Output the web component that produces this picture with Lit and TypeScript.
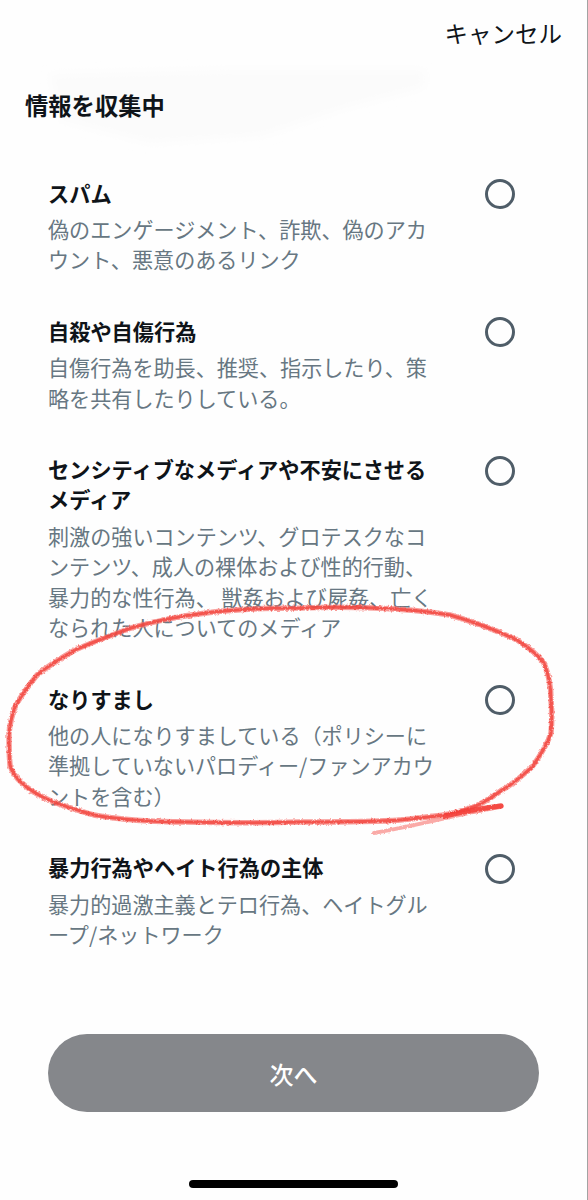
import { LitElement, html, css, svg } from "lit";
import { customElement } from "lit/decorators.js";

interface Item { title: string[]; desc: string[]; }

const ITEMS: Item[] = [
  { title: ["スパム"], desc: ["偽のエンゲージメント、詐欺、偽のアカ", "ウント、悪意のあるリンク"] },
  { title: ["自殺や自傷行為"], desc: ["自傷行為を助長、推奨、指示したり、策", "略を共有したりしている。"] },
  {
    title: ["センシティブなメディアや不安にさせる", "メディア"],
    desc: ["刺激の強いコンテンツ、グロテスクなコ", "ンテンツ、成人の裸体および性的行動、", "暴力的な性行為、 獣姦および屍姦、亡く", "なられた人についてのメディア"],
  },
  { title: ["なりすまし"], desc: ["他の人になりすましている（ポリシーに", "準拠していないパロディー/ファンアカウ", "ントを含む）"] },
  { title: ["暴力行為やヘイト行為の主体"], desc: ["暴力的過激主義とテロ行為、ヘイトグル", "ープ/ネットワーク"] },
];

const LOOP =
  "M501 806 C470 812 440 816 400 820 C375 822 338 822 300 822 C262 823 225 823 187 822 C155 822 122 820 94 815 C78 810 62 806 49 800 C38 795 29 790 22 783 C15 777 12 772 10 765 C9 755 9 744 9 733 C10 724 12 715 15 707 C21 695 29 685 37 675 C48 666 61 658 75 650 C93 642 112 635 131 628 C155 621 180 616 206 613 C237 609 268 608 300 608 C325 607 350 607 375 608 C400 609 425 611 450 615 C474 622 496 630 517 640 C528 647 537 654 544 663 C549 675 551 687 551 700 C552 711 552 722 551 733 C547 745 540 756 532 767 C522 776 512 785 502 790 C493 797 484 802 476 806 C465 810 455 813 443 815";

@customElement("app-root")
export class AppRoot extends LitElement {
  static styles = css`
    :host {
      display: block;
      position: relative;
      width: 588px;
      height: 1200px;
      overflow: hidden;
      background: #fefefe;
      font-family: "Noto Sans CJK JP", "Noto Sans", sans-serif;
      color: #0f1419;
    }
    .page {
      position: relative;
      display: flex;
      flex-direction: column;
      height: 1200px;
      box-sizing: border-box;
      padding: 18px 0 12px;
      border-right: 1px solid #a3a3a3;
    }
    .top {
      display: flex;
      justify-content: flex-end;
      padding-right: 25px;
      font-size: 23.5px;
      line-height: 30px;
      white-space: nowrap;
    }
    .heading {
      margin: 42px 0 0 25px;
      font-size: 23.3px;
      line-height: 30px;
      font-weight: 700;
      white-space: nowrap;
    }
    .list {
      display: flex;
      flex-direction: column;
      gap: 42.6px;
      margin-top: 59px;
      padding: 0 72px 0 48px;
    }
    .item {
      display: flex;
      justify-content: space-between;
      align-items: flex-start;
    }
    .text { display: flex; flex-direction: column; }
    .title {
      font-size: 21.2px;
      line-height: 30px;
      font-weight: 700;
      color: #0f1419;
      white-space: nowrap;
    }
    .title .line { margin-top: -1.5px; margin-bottom: 1.5px; }
    .desc {
      margin-top: 5px;
      font-size: 21.1px;
      line-height: 30.4px;
      color: #677782;
      white-space: nowrap;
    }
    .line { display: block; }
    .radio {
      width: 30px;
      height: 30px;
      box-sizing: border-box;
      border: 3px solid #4f5d68;
      border-radius: 50%;
      flex: none;
    }
    .next {
      margin: auto 48px 0 48px;
      height: 78px;
      border-radius: 39px;
      background: #85878b;
      color: #fff;
      display: flex;
      align-items: center;
      justify-content: center;
      font-size: 24px;
      font-weight: 500;
    }
    .bar {
      width: 209px;
      height: 8px;
      border-radius: 4px;
      background: #000;
      margin: 68px auto 0;
    }
    .ink,
    .smudge {
      position: absolute;
      inset: 0;
      width: 588px;
      height: 1200px;
      pointer-events: none;
    }
  `;

  private lines(rows: string[]) {
    return rows.map((r) => html`<span class="line">${r}</span>`);
  }

  render() {
    return html`
      <svg class="smudge" viewBox="0 0 588 1200">
        ${svg`
          <defs>
            <filter id="soft" filterUnits="userSpaceOnUse" x="20" y="50" width="440" height="120">
              <feGaussianBlur stdDeviation="5"></feGaussianBlur>
            </filter>
          </defs>
          <path d="M50 74 L225 70 L425 70 L425 87 L345 108 L262 136 L150 143 L60 120 Z" fill="#fbfbfb" filter="url(#soft)"></path>
        `}
      </svg>
      <div class="page">
        <div class="top">キャンセル</div>
        <div class="heading">情報を収集中</div>
        <div class="list">
          ${ITEMS.map(
            (it) => html`
              <div class="item">
                <div class="text">
                  <div class="title">${this.lines(it.title)}</div>
                  <div class="desc">${this.lines(it.desc)}</div>
                </div>
                <div class="radio"></div>
              </div>
            `
          )}
        </div>
        <div class="next">次へ</div>
        <div class="bar"></div>
      </div>
      <svg class="ink" viewBox="0 0 588 1200" fill="none" stroke-linecap="round">
        ${svg`
          <defs>
            <filter id="pencil" filterUnits="userSpaceOnUse" x="0" y="590" width="588" height="260">
              <feTurbulence type="fractalNoise" baseFrequency="0.45" numOctaves="2" seed="4" result="n"></feTurbulence>
              <feDisplacementMap in="SourceGraphic" in2="n" scale="3" xChannelSelector="R" yChannelSelector="G"></feDisplacementMap>
            </filter>
          </defs>
          <g filter="url(#pencil)">
            <path d=${LOOP} stroke="#f7746f" stroke-width="5.5" opacity="0.7"></path>
            <path d=${LOOP} stroke="#f23c36" stroke-width="3" opacity="0.75"></path>
            <path d="M501 806 C470 812 420 825 374 833" stroke="#f88f8a" stroke-width="4" opacity="0.75"></path>
            <path d="M501 806 C480 808 462 812 445 816" stroke="#f23c36" stroke-width="5" opacity="0.8"></path>
          </g>
        `}
      </svg>
    `;
  }
}
